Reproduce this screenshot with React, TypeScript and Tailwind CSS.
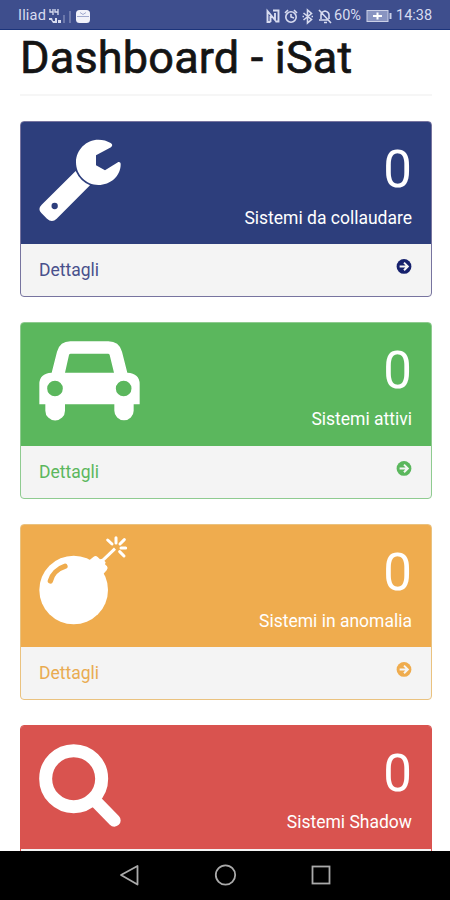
import React from "react";

type Panel = {
  label: string;
  card: string;
  head: string;
  foot: string;
  ink: string;
  icon: React.ReactNode;
  details: boolean;
};

const ArrowCircle = () => (
  <svg width="16" height="16" viewBox="0 0 16 16" className="mt-[14px]">
    <circle cx="8" cy="8.400" r="7.4" fill="currentColor" />
    <path d="M3.6 8.400H11M8 4.600L11.8 8.400L8 12.200" fill="none" stroke="#f5f5f5" strokeWidth="2" />
  </svg>
);

const Wrench = () => (
  <svg width="112" height="96" viewBox="81 63 336 288" fill="#fff">
    <path d="M197 183Q210 213 240 226L140 326Q126 340 111 326L94 309Q82 297 95 284Z" />
    <path d="M302 99Q311 104 303 112L258 136V166L285 181L325 156Q333 155 332 165C331 198 302 225 265 225C228 225 198 195 198 157C198 119 229 89 265 89Q286 89 302 99Z" />
    <circle cx="134" cy="288" r="9.5" fill="#2d3e7c" />
  </svg>
);

const Car = () => (
  <svg width="112" height="96" viewBox="81 66 336 288" fill="#fff">
    <path
      fillRule="evenodd"
      d="M125 188L141 125Q150 94 181 94H295Q327 94 336 125L352 188Q389 190 389 222V283H371V302A29 29 0 0 1 313 302V283H165V302A29 29 0 0 1 106 302V283H88V222Q88 190 125 188ZM165 188H312L299 135Q298 131 294 131H182Q178 131 177 135ZM135 212A23.500 23.500 0 1 0 135 259A23.500 23.500 0 1 0 135 212ZM341 212A23.500 23.500 0 1 0 341 259A23.500 23.500 0 1 0 341 212Z"
    />
  </svg>
);

const Bomb = () => (
  <svg width="112" height="96" viewBox="81 57 336 288" fill="#fff">
    <circle cx="191" cy="225" r="103" />
    <path d="M235 138L251 125Q257 121 263 126L270 133L277 131L287 142L285 148L291 154Q296 160 290 166L278 179Z" />
    <path d="M275 139L315 101" stroke="#fff" strokeWidth="9" />
    <path
      d="M293 75L306 87M318 68V84M343 74L330 87M333 99H347M329 110L342 123"
      stroke="#fff"
      strokeWidth="9"
      strokeLinecap="round"
    />
    <path d="M121 198C126 178 143 161 165 154" fill="none" stroke="#efac4e" strokeWidth="16" strokeLinecap="round" />
  </svg>
);

const Magnifier = () => (
  <svg width="112" height="96" viewBox="81 60 336 288" fill="none" stroke="#fff">
    <circle cx="191" cy="191" r="84" strokeWidth="39" />
    <path d="M258 260L313 316" strokeWidth="38" strokeLinecap="round" />
  </svg>
);

const panels: Panel[] = [
  { label: "Sistemi da collaudare", card: "h-[176px] border-[#77749f]", head: "h-[123px] bg-[#2d3e7c] border-[#152069]", foot: "text-[#48508c]", ink: "text-[#16216d]", icon: <Wrench />, details: true },
  { label: "Sistemi attivi", card: "h-[177px] border-[#8fcb90]", head: "h-[124px] bg-[#5bb75d] border-[#52ad55]", foot: "text-[#5bb75d]", ink: "text-[#5bb75d]", icon: <Car />, details: true },
  { label: "Sistemi in anomalia", card: "h-[176px] border-[#eac27f]", head: "h-[123px] bg-[#efac4e] border-[#e9a443]", foot: "text-[#e9ab51]", ink: "text-[#efac4e]", icon: <Bomb />, details: true },
  { label: "Sistemi Shadow", card: "h-[177px] border-[#d9534f]", head: "h-[124px] bg-[#d9534f] border-[#d14b48]", foot: "text-[#d9534f]", ink: "text-[#d9534f]", icon: <Magnifier />, details: false },
];

const StatusBar = () => (
  <header className="flex h-[30px] shrink-0 items-center border-b border-[#1c347b] bg-[#3e4e8d] pt-[2px] pr-[17px] pl-[18px] text-[#d8dcf0]">
    <span className="w-[29px] pt-px text-[14.500px] leading-4 tracking-[0.2px]">Iliad</span>
    <svg width="43" height="18" viewBox="0 0 43 18" fill="currentColor">
      <path d="M3 2V5H6M6 2V8M8 2V5H11M11 2V8" fill="none" stroke="currentColor" strokeWidth="1.3" />
      <path d="M2 11H5L6 14H9V16H6L4 13H2ZM8 11H10V16H8ZM11 13H14V16H11Z" />
      <path d="M16 8H18V16H16ZM22 4H24V16H22Z" opacity=".3" />
      <rect x="29" y="3" width="14" height="13" rx="3.500" fill="#f1f2fa" />
      <path d="M30 9.500H42M33 5.500L36 7.500L39 5.500" stroke="#a0a9ce" fill="none" />
    </svg>
    <div className="flex-1" />
    <svg width="68" height="18" viewBox="0 0 68 18" fill="none" stroke="currentColor" strokeWidth="1.600">
      <path d="M5.500 15H2.500V4L10 13V6M5.500 15V9M8 3.500H13.500V14.500H10.500" strokeWidth="1.900" />
      <circle cx="26" cy="10" r="5.200" />
      <path d="M20 6L23 3M32 6L29 3M26 7V10L29 11" />
      <path d="M38.500 6L46.500 12.500L42.500 16V3L46.500 6.500L38.500 13M37.500 9.500H39M46.500 9.500H48" strokeWidth="1.600" />
      <path d="M54 3L66 16M56 12V8Q56 5 60 4Q64 5 64 8V12M54 13H63M59 15.500H62" />
    </svg>
    <span className="ml-[1px] w-[29px] pt-px text-[14.500px] leading-4">60%</span>
    <svg width="26" height="14" viewBox="0 0 26 14" className="ml-[3px]">
      <rect x="1" y="1.500" width="21" height="11" fill="#8994c1" stroke="#cbd0e7" />
      <path d="M7 7H16M11.500 3.500V10.500" stroke="#fff" strokeWidth="2" />
      <path d="M24.500 4V10" stroke="#cbd0e7" strokeWidth="2" />
    </svg>
    <span className="ml-[4px] w-[37px] pt-px text-[14.500px] leading-4 whitespace-nowrap">14:38</span>
  </header>
);

const Card = ({ panel }: { panel: Panel }) => (
  <section className={`flex shrink-0 flex-col overflow-hidden rounded-[4px] border bg-[#f4f4f4] ${panel.card}`}>
    <div className={`-mx-px -mt-px flex shrink-0 justify-between rounded-t-[4px] border border-b-0 pt-[9px] pr-[19px] pl-[16px] text-white ${panel.head}`}>
      {panel.icon}
      <div className="flex flex-col items-end pt-[11px]">
        <span className="text-[51px] leading-[56px]">0</span>
        <span className="mt-[8px] text-[17.500px] leading-[24px] whitespace-nowrap">{panel.label}</span>
      </div>
    </div>
    {panel.details && (
      <div className="flex flex-1 justify-between pr-[19px] pl-[18px]">
        <span className={`pt-[14px] text-[17.500px] leading-6 ${panel.foot}`}>Dettagli</span>
        <span className={panel.ink}>
          <ArrowCircle />
        </span>
      </div>
    )}
  </section>
);

export default function App() {
  return (
    <div className="flex h-[900px] w-[450px] flex-col overflow-hidden bg-white font-['Roboto',sans-serif]">
      <StatusBar />
      <main className="flex min-h-0 flex-1 flex-col overflow-hidden pr-[18px] pl-[20px]">
        <h1 className="h-[66px] shrink-0 border-b-2 border-[#f6f6f6] text-[45px] leading-[56px] font-normal tracking-[0.2px] whitespace-nowrap text-[#141414] [-webkit-text-stroke:0.7px_#141414]">
          Dashboard - iSat
        </h1>
        <div className="flex flex-col gap-[25px] pt-[25px]">
          {panels.map((panel) => (
            <Card key={panel.label} panel={panel} />
          ))}
        </div>
      </main>
      <nav className="flex h-[49px] shrink-0 items-center justify-between bg-black pr-[119px] pb-px pl-[119px]">
        <svg width="21" height="24" viewBox="0 0 21 24" fill="none" stroke="#aaa" strokeWidth="1.800">
          <path d="M2 12L18.500 3V21.500Z" strokeLinejoin="round" />
        </svg>
        <svg width="24" height="24" viewBox="0 0 24 24" fill="none" stroke="#aaa" strokeWidth="1.800">
          <circle cx="11.500" cy="12" r="9.700" />
        </svg>
        <svg width="20" height="24" viewBox="0 0 20 24" fill="none" stroke="#aaa" strokeWidth="1.800">
          <rect x="1.500" y="3.500" width="17" height="17" />
        </svg>
      </nav>
    </div>
  );
}
